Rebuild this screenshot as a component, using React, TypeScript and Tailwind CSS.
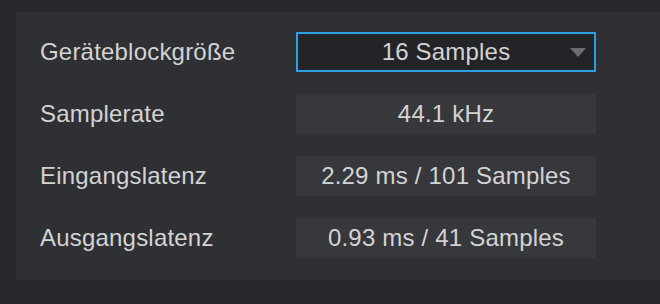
import React from 'react';

const rows = [
  { label: 'Samplerate', value: '44.1 kHz' },
  { label: 'Eingangslatenz', value: '2.29 ms / 101 Samples' },
  { label: 'Ausgangslatenz', value: '0.93 ms / 41 Samples' },
];

export default function App() {
  return (
    <div
      className="w-[660px] h-[304px] bg-[#28292c] pt-3 pl-4 text-[#d3d3d4]"
      style={{ fontFamily: '"Liberation Sans", Arial, sans-serif' }}
    >
      <div className="bg-[#2f3034] h-[268px] pl-6 pt-5 flex flex-col gap-[22px]">
        <div className="flex items-center">
          <div className="w-[256px] text-[24px] tracking-[0.2px]">Geräteblockgröße</div>
          <div className="relative w-[300px] h-10 border-2 border-[#2b9fe2] bg-[#232427] flex items-center justify-center text-[24px] tracking-[0.2px]">
            16 Samples
            <svg className="absolute right-[8px] top-[14px]" width="16" height="9" viewBox="0 0 16 9">
              <polygon points="0,0 16,0 8,9" fill="#6c6d71" />
            </svg>
          </div>
        </div>
        {rows.map((r) => (
          <div key={r.label} className="flex items-center">
            <div className="w-[256px] text-[24px] tracking-[0.2px]">{r.label}</div>
            <div className="w-[300px] h-10 bg-[#37383c] flex items-center justify-center text-[24px] tracking-[0.2px]">
              {r.value}
            </div>
          </div>
        ))}
      </div>
    </div>
  );
}
